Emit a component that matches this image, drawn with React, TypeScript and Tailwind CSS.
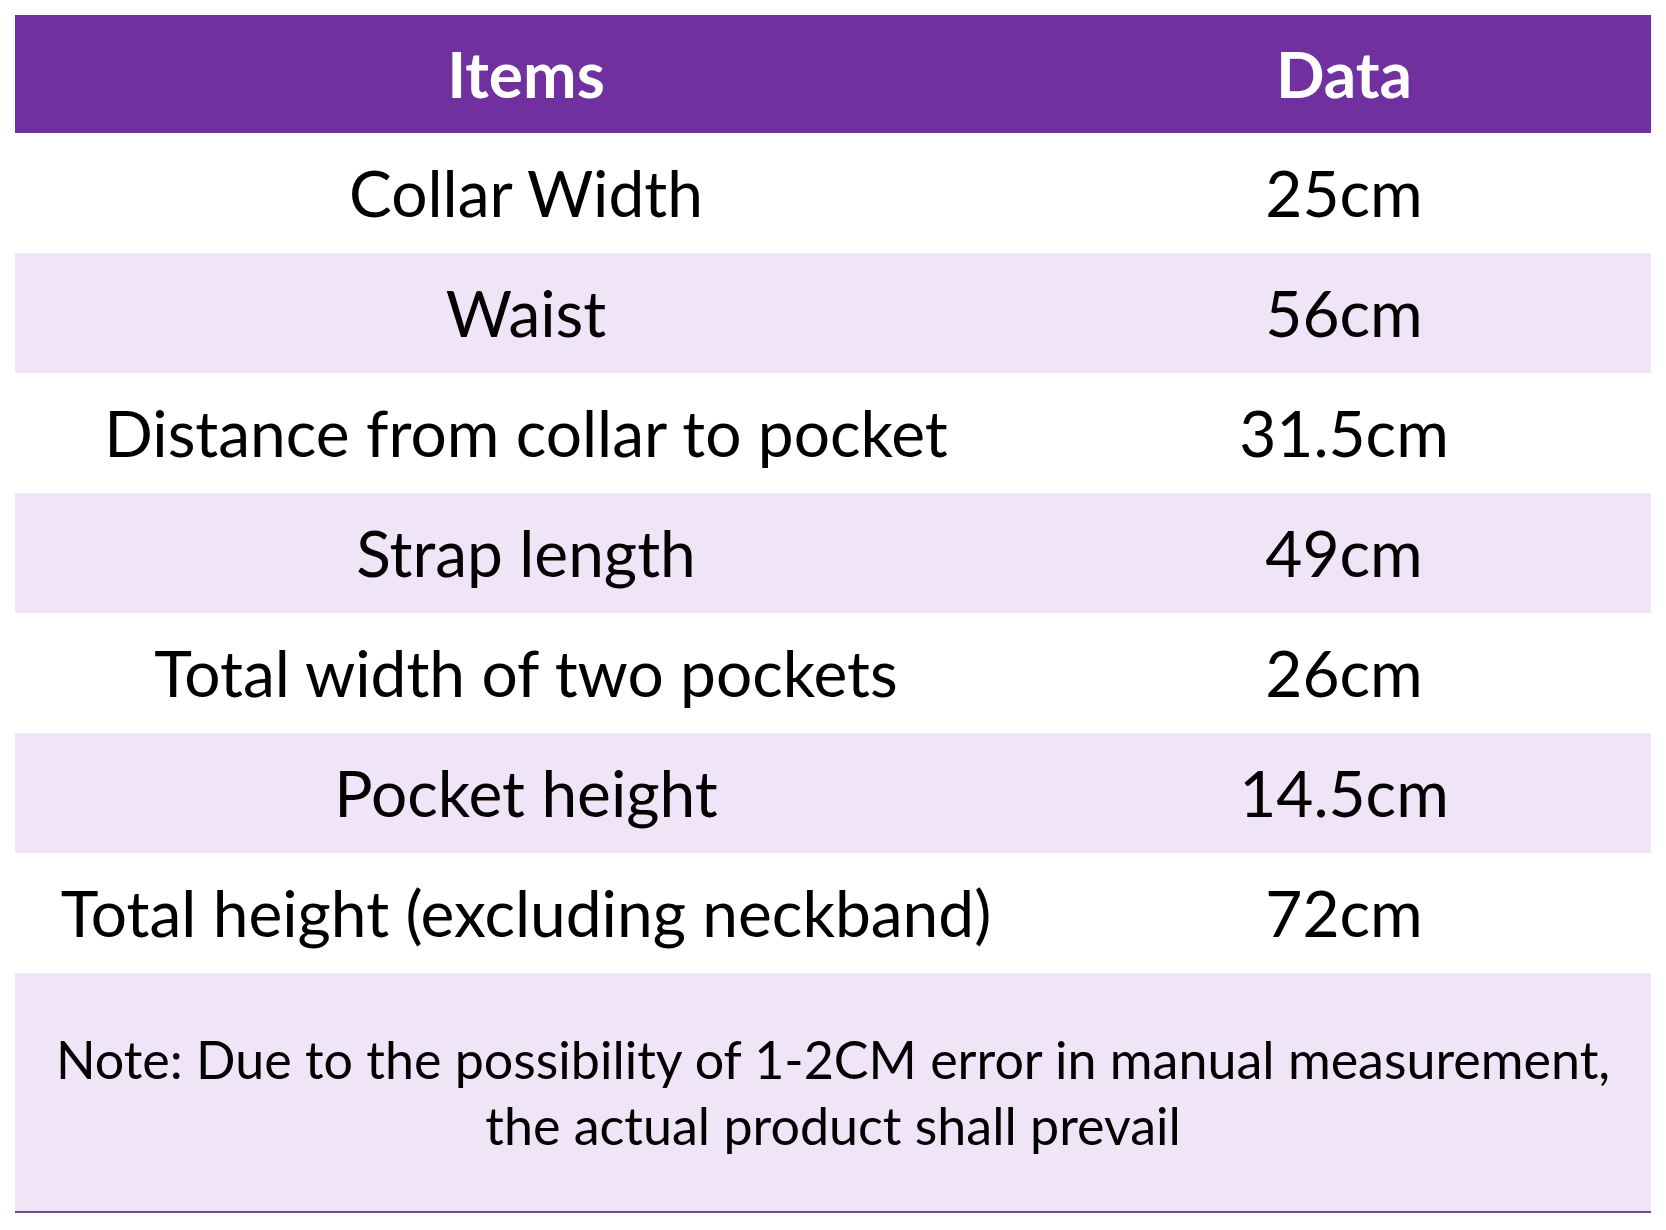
const rows = [
  { item: "Collar Width", data: "25cm" },
  { item: "Waist", data: "56cm" },
  { item: "Distance from collar to pocket", data: "31.5cm" },
  { item: "Strap length", data: "49cm" },
  { item: "Total width of two pockets", data: "26cm" },
  { item: "Pocket height", data: "14.5cm" },
  { item: "Total height (excluding neckband)", data: "72cm" },
];

export default function App() {
  return (
    <div className="min-h-screen bg-white pt-[15px] pl-[15px] font-['Lato','Open_Sans',sans-serif] text-black">
      <div className="w-[1636px]">
        <div className="grid h-[118px] grid-cols-[1022px_614px] items-center bg-[#7030a0] text-[64px] font-bold leading-none text-white">
          <div className="text-center">Items</div>
          <div className="text-center">Data</div>
        </div>

        {rows.map((row, i) => (
          <div
            key={row.item}
            className={
              i % 2 === 1
                ? "grid h-[120px] grid-cols-[1022px_614px] items-center bg-[#efe5f6] text-[64px] leading-none"
                : "grid h-[120px] grid-cols-[1022px_614px] items-center bg-white text-[64px] leading-none"
            }
          >
            <div className="whitespace-nowrap text-center">{row.item}</div>
            <div className="text-center">{row.data}</div>
          </div>
        ))}

        <div className="flex h-[240px] items-center justify-center border-b-2 border-[#7a4a9c] bg-[#efe5f6]">
          <p className="whitespace-nowrap text-center text-[52px] leading-[66px]">
            Note: Due to the possibility of 1-2CM error in manual measurement,
            <br />
            the actual product shall prevail
          </p>
        </div>
      </div>
    </div>
  );
}
